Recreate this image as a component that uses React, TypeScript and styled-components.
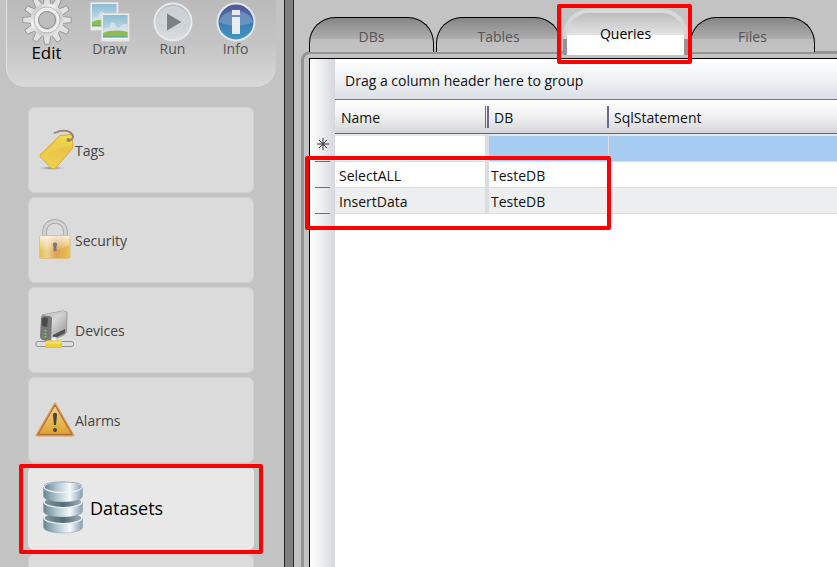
import React, { useState } from "react";
import styled, { createGlobalStyle, css } from "styled-components";

const GlobalStyle = createGlobalStyle`
  *, *::before, *::after { box-sizing: border-box; }
  html, body, #root { height: 100%; }
  body {
    margin: 0;
    overflow: hidden;
    background: #c3c3c3;
    font-family: "Open Sans", "Noto Sans", sans-serif;
    font-size: 14px;
    color: #111;
  }
  button { font: inherit; border: 0; margin: 0; padding: 0; cursor: pointer; }
`;

const Shell = styled.div`
  display: grid;
  grid-template-columns: 284px 10px minmax(0, 1fr);
  height: 100%;
  overflow: hidden;
`;

const Sidebar = styled.aside`
  display: flex;
  flex-direction: column;
  gap: 20px;
  min-height: 0;
  padding: 0 8px 0 6px;
`;

const Splitter = styled.div`
  background: #808080;
  border: solid #262626;
  border-width: 0 1px;
`;

const Toolbar = styled.nav`
  display: flex;
  flex: none;
  height: 87px;
  padding-left: 8px;
  border-left: 1px solid #e2e2e2;
  border-radius: 0 0 20px 20px;
  background: linear-gradient(#bababa, #c4c4c4 50%, #d8d8d8);
`;

const Mode = styled.button<{ $active?: boolean }>`
  display: flex;
  flex-direction: column;
  align-items: center;
  justify-content: flex-start;
  width: 63px;
  height: 66px;
  background: none;
  color: ${(p) => (p.$active ? "#000" : "#555")};
  font-size: ${(p) => (p.$active ? "17px" : "14px")};
  line-height: ${(p) => (p.$active ? "16px" : "14px")};
  white-space: nowrap;
  svg { display: block; flex: none; }
`;

const ModeIcon = styled.span<{ $active?: boolean }>`
  display: flex;
  align-items: flex-end;
  height: ${(p) => (p.$active ? "45px" : "42px")};
`;

const Modules = styled.nav`
  display: flex;
  flex-direction: column;
  gap: 4px;
  padding: 0 22px;
`;

const calloutFrame = css`
  content: "";
  position: absolute;
  z-index: 2;
  border: 4px solid #fe0000;
  border-radius: 2px;
  pointer-events: none;
`;

const ModuleButton = styled.button<{ $active?: boolean }>`
  position: relative;
  display: flex;
  flex: none;
  align-items: center;
  gap: ${(p) => (p.$active ? "7px" : "0")};
  height: ${(p) => (p.$active ? "84px" : "86px")};
  padding-left: ${(p) => (p.$active ? "15px" : "7px")};
  border-radius: 7px;
  background: ${(p) => (p.$active ? "#e8e8e8" : "#dbdbdb")};
  box-shadow: inset 0 0 0 1px ${(p) => (p.$active ? "#ececec" : "#d1d1d1")};
  color: ${(p) => (p.$active ? "#000" : "#444")};
  font-size: ${(p) => (p.$active ? "18px" : "14px")};
  svg { display: block; flex: none; }
  ${(p) =>
    p.$active &&
    css`
      margin-top: -1px;
      &::after { ${calloutFrame} inset: -2px -9px -4px; }
    `}
`;

const Workspace = styled.main`
  display: flex;
  flex-direction: column;
  min-width: 0;
  min-height: 0;
  padding: 9px 0 0 7px;
`;

const TabStrip = styled.div`
  position: relative;
  z-index: 1;
  display: flex;
  align-items: flex-end;
  gap: 2px;
  height: 43px;
  padding-left: 8px;
`;

const Tab = styled.button<{ $active?: boolean }>`
  position: relative;
  flex: none;
  width: 125px;
  height: 35px;
  border: 1px solid #000;
  border-bottom: 0;
  border-radius: 26px 26px 0 0;
  background: linear-gradient(#868686, #afafaf 63%, #bfbfbf 63%, #c3c3c3);
  color: #555;
  padding-top: 3px;
  ${(p) =>
    p.$active &&
    css`
      align-self: flex-start;
      height: 46px;
      padding: 0 0 2px;
      border: 4px solid transparent;
      border-bottom: 0;
      background:
        linear-gradient(#bcbcbc, #e4e4e4 52%, #fff 52%) padding-box,
        linear-gradient(#dadada, #d2d2d2 66%, #949494 66%) border-box;
      color: #000;
      &::after { ${calloutFrame} inset: -9px -8px -9px -10px; }
    `}
`;

const Frame = styled.div`
  display: flex;
  flex: 1;
  min-height: 0;
  margin-top: -1px;
  padding: 4px 0 0 5px;
  border: solid #949494;
  border-width: 3px 0 0 3px;
  border-radius: 9px 0 0 0;
`;

const DataGrid = styled.section`
  position: relative;
  flex: 1;
  min-width: 0;
  border: solid #000;
  border-width: 1px 0 0 1px;
  background:
    linear-gradient(90deg, #fff, #f3f5f6 30%, #d5d7dd) 0 0 / 25px 100% no-repeat,
    #fff;
`;

const GroupPanel = styled.div`
  display: flex;
  align-items: center;
  height: 41px;
  margin-left: 25px;
  padding: 2px 10px 0;
  border-bottom: 1px solid #777;
  background: linear-gradient(#fff, #f0f2f4 50%, #dbe0e7);
`;

const Table = styled.table`
  width: 100%;
  table-layout: fixed;
  border-collapse: separate;
  border-spacing: 0;
  text-align: left;
  th, td { padding: 0; font-weight: 400; white-space: nowrap; }
`;

const HeadCell = styled.th`
  height: 34px;
  background: linear-gradient(#fff, #f2f2f3 45%, #d5d6da);
  border-bottom: 1px solid #666;
`;

const HeadLabel = styled.span<{ $rule?: "double" | "single" }>`
  display: flex;
  align-items: center;
  height: 22px;
  padding-top: 1px;
  padding-left: ${(p) => (p.$rule === "double" ? "6px" : "5px")};
  border-right: ${(p) => (p.$rule ? "2px solid #6c6a90" : "0")};
  ${(p) =>
    p.$rule === "double" &&
    css`
      background: linear-gradient(#6c6a90, #6c6a90) right 1px top 0 / 1px 100% no-repeat;
    `}
`;

const Row = styled.tr<{ $tone: "new" | "plain" | "shade" }>`
  td {
    height: ${(p) => (p.$tone === "new" ? "28px" : "26px")};
    padding: 2px 0 0 4px;
    border-bottom: 1px solid #dcdde2;
    background: ${(p) => ({ new: "#a6ccf1", plain: "#fff", shade: "#eceef0" })[p.$tone]};
    ${(p) => p.$tone === "new" && "border-top: 2px solid #e1e6ed;"}
  }
  td:nth-child(2) {
    border-right: 4px solid #dcdde0;
    ${(p) => p.$tone === "new" && "background: #fff;"}
  }
  td:nth-child(3) {
    padding-left: 2px;
    border-right: 1px solid #dcdde0;
  }
`;

const RowHead = styled.th`
  vertical-align: bottom;
`;

const RowMark = styled.span`
  display: flex;
  align-items: flex-start;
  justify-content: center;
  width: 15px;
  height: 24px;
  margin-left: 5px;
  border-bottom: 1px solid #6c6a90;
`;

const Callout = styled.span`
  &::after {
    ${calloutFrame}
    left: -5px;
    top: 97px;
    width: 306px;
    height: 74px;
  }
`;

const Gear = () => {
  const teeth = Array.from({ length: 12 }, (_, i) => i * 30);
  return (
    <svg width="50" height="50" viewBox="0 0 50 50" aria-hidden="true">
      <defs>
        <linearGradient id="gear" x1="0" y1="0" x2="1" y2="1">
          <stop offset="0" stopColor="#aaa" />
          <stop offset=".35" stopColor="#f5f5f5" />
          <stop offset=".6" stopColor="#cacaca" />
          <stop offset="1" stopColor="#f4f4f4" />
        </linearGradient>
      </defs>
      <g fill="#e2e2e2" stroke="#858585" strokeWidth=".7">
        {teeth.map((a) => (
          <path key={a} d="M21.4 10 22.5.8h5L28.600 10z" transform={`rotate(${a} 25 25)`} />
        ))}
      </g>
      <circle cx="25" cy="25" r="16.500" fill="url(#gear)" />
      <circle cx="25" cy="25" r="11.500" fill="none" stroke="#efefef" strokeWidth="3" />
      <circle cx="25" cy="25" r="13" fill="none" stroke="#aaa" strokeWidth=".8" />
      <circle cx="25" cy="25" r="8.500" fill="#bdbdbd" stroke="#8b8b8b" />
    </svg>
  );
};

const Photos = () => (
  <svg width="40" height="40" viewBox="0 0 40 40" aria-hidden="true">
    <defs>
      <linearGradient id="sky" x1="0" y1="0" x2="0" y2="1">
        <stop offset="0" stopColor="#8dbdd5" />
        <stop offset="1" stopColor="#d3e2e9" />
      </linearGradient>
      <g id="photo">
        <path fill="#ececec" stroke="#d5d5d5" strokeWidth=".5" d="M.3.300h28v28h-28z" />
        <path fill="url(#sky)" d="M2 2h24.600v22.500H2z" />
        <path fill="#d7e0e9" d="M2 19c1-3 3-5 6-4 1-5 4-7 6-4 1 3 2 4 4 4 3-4 6-5 8.600-3v9H2z" />
        <path fill="#8cbd55" d="M2 20c7-3 15-3 24.600-1v5H2z" />
        <path fill="#63ad8c" d="M2 23h24.600v1.500H2z" />
      </g>
    </defs>
    <use href="#photo" />
    <use href="#photo" x="11" y="11" />
  </svg>
);

const Play = () => (
  <svg width="40" height="40" viewBox="0 0 40 40" aria-hidden="true">
    <defs>
      <linearGradient id="silver" x1="0" y1="0" x2="0" y2="1">
        <stop offset="0" stopColor="#b3babf" />
        <stop offset="1" stopColor="#dce1e3" />
      </linearGradient>
    </defs>
    <circle cx="20" cy="20" r="18.500" fill="url(#silver)" stroke="#e9e9e9" strokeWidth="2" />
    <path fill="#d3d9dc" opacity=".7" d="M3 20C5 10 11 4 20 4s15 6 17 16c-9 5-25 5-34 0z" />
    <path fill="#7b8085" d="M14 11.500 28.500 20 14 28.500z" />
  </svg>
);

const Info = () => (
  <svg width="40" height="40" viewBox="0 0 40 40" aria-hidden="true">
    <defs>
      <linearGradient id="blue" x1="0" y1="0" x2="0" y2="1">
        <stop offset="0" stopColor="#56559a" />
        <stop offset=".5" stopColor="#3c78ae" />
        <stop offset="1" stopColor="#429bc8" />
      </linearGradient>
    </defs>
    <circle cx="20" cy="20" r="18.500" fill="url(#blue)" stroke="#e5e7ea" strokeWidth="2" />
    <path fill="#a5c0da" opacity=".4" d="M3 20C5 13 11 9 20 9s15 4 17 11c-9 5-25 5-34 0z" />
    <path fill="#ececf0" d="M16 8h8v5h-8zM16 15h8v17h-8z" />
  </svg>
);

const TagIcon = () => (
  <svg width="40" height="44" viewBox="0 0 40 44" aria-hidden="true">
    <defs>
      <linearGradient id="tag" x1=".7" y1="0" x2=".3" y2="1">
        <stop offset="0" stopColor="#f1dc3c" />
        <stop offset=".3" stopColor="#ebc146" />
        <stop offset="1" stopColor="#ecd34c" />
      </linearGradient>
      <radialGradient id="tagShade">
        <stop offset="0" stopColor="#666" />
        <stop offset="1" stopColor="#bbb" stopOpacity="0" />
      </radialGradient>
    </defs>
    <ellipse cx="17" cy="40" rx="14" ry="2" fill="url(#tagShade)" />
    <path fill="url(#tag)" stroke="#dfa640" d="M25 7.500 37 6.500 38 20 20 40.500 17 41 5.500 29 5 27z" strokeLinejoin="round" />
    <path fill="#f2e36b" opacity=".35" d="M25 8.500 36.500 7.500 37.500 17 15 23 9 27z" />
    <circle cx="33.500" cy="12" r="2" fill="#9d8060" />
    <path fill="none" stroke="#9a8171" strokeWidth="1.800" strokeLinecap="round" d="M33.500 12.500c4 0 6-4 3-7-4-4-11-3-17-.500" />
  </svg>
);

const LockIcon = () => (
  <svg width="40" height="42" viewBox="0 0 40 42" aria-hidden="true">
    <defs>
      <linearGradient id="brass">
        <stop offset="0" stopColor="#e5bd55" />
        <stop offset=".25" stopColor="#edd391" />
        <stop offset=".55" stopColor="#dfa055" />
        <stop offset="1" stopColor="#e9c251" />
      </linearGradient>
      <linearGradient id="brassTop" x1="0" y1="0" x2="0" y2="1">
        <stop offset="0" stopColor="#fff" stopOpacity=".75" />
        <stop offset="1" stopColor="#fff" stopOpacity=".05" />
      </linearGradient>
    </defs>
    <path fill="none" stroke="#a0a0a0" strokeWidth="4.500" d="M9.500 17v-4c0-14 21-14 21 0v4" />
    <path fill="none" stroke="#d3d3d3" strokeWidth="2.800" d="M9.500 17v-4c0-14 21-14 21 0v4" />
    <rect x="4.500" y="16.500" width="30.500" height="23" rx="2" fill="url(#brass)" stroke="#e0c27c" />
    <path fill="url(#brassTop)" d="M5 17h29.500v9c-6 4-16 6-29.500 5z" />
    <path fill="#777" d="M20 23.500a2 2 0 0 0-1.500 3.500V32h3v-5A2 2 0 0 0 20 23.500z" />
  </svg>
);

const DeviceIcon = () => (
  <svg width="40" height="40" viewBox="0 0 40 40" aria-hidden="true">
    <defs>
      <linearGradient id="metal" x1="0" y1="0" x2="1" y2="1">
        <stop offset="0" stopColor="#999" />
        <stop offset=".4" stopColor="#d8d8d8" />
        <stop offset="1" stopColor="#8a8a8a" />
      </linearGradient>
    </defs>
    <path fill="url(#metal)" stroke="#8c8c8c" strokeWidth=".8" d="M7 5 28 1l4 1-.500 20L29 25l-12 5-7-1z" />
    <path fill="#c9c9c9" d="m8 5 20-4 3 1-13 4z" />
    <path fill="#777" d="M6 8c0-3 10-3 11 0l-1 22-5 1c-4-1-6-2-6-5z" />
    <path fill="#4a4a4a" d="M7 9c0-2 6-2 6 0l-1 8-5-1z" />
    <path fill="#505050" d="m18 25 12-6v4l-12 6z" />
    <path stroke="#60d956" strokeWidth="2" strokeDasharray="1.500 1.500" d="M10.500 20v8" />
    <rect x="16" y="27" width="6" height="6" rx="2" fill="#eee" stroke="#aaa" strokeWidth=".6" />
    <rect x=".700" y="31.500" width="38" height="5" rx="2.500" fill="#ddd" stroke="#909090" />
    <path fill="#ecd333" stroke="#e6bf38" d="M11 31h15.500v6.500H11z" />
    <path fill="#f3e36b" d="M11 31.500h15.500v2H11z" />
  </svg>
);

const AlarmIcon = () => (
  <svg width="40" height="36" viewBox="0 0 40 36" aria-hidden="true">
    <defs>
      <linearGradient id="amber" x1="0" y1="0" x2="0" y2="1">
        <stop offset="0" stopColor="#efd28b" />
        <stop offset="1" stopColor="#e0a32c" />
      </linearGradient>
    </defs>
    <path fill="#dda24e" stroke="#dda24e" strokeWidth="2" strokeLinejoin="round" d="M20 1.500 38.500 33.500h-37z" />
    <path fill="url(#amber)" stroke="#b56d48" strokeWidth="1.300" strokeLinejoin="round" d="M20 3 37 32.500H3z" />
    <path fill="#444" d="M18 13c0-3 4-3 4 0l-1 10h-2z" />
    <circle cx="20" cy="28" r="2" fill="#444" />
  </svg>
);

const DatabaseIcon = () => (
  <svg width="40" height="54" viewBox="0 0 40 54" aria-hidden="true">
    <defs>
      <linearGradient id="steel">
        <stop offset="0" stopColor="#678594" />
        <stop offset=".35" stopColor="#b4c7d2" />
        <stop offset=".68" stopColor="#f6f9fb" />
        <stop offset="1" stopColor="#849eb0" />
      </linearGradient>
      <linearGradient id="shadow">
        <stop offset="0" stopColor="#8498a1" />
        <stop offset=".5" stopColor="#536a74" />
        <stop offset="1" stopColor="#a0b2bb" />
      </linearGradient>
    </defs>
    {[32, 16, 1].map((y) => (
      <g key={y} transform={`translate(0 ${y})`}>
        <path fill="url(#steel)" stroke="#7791a0" strokeWidth=".4" d="M.5 5v9c0 8 39 8 39 0V5z" />
        <ellipse cx="20" cy="5" rx="19" ry="5.500" fill={y === 1 ? "url(#steel)" : "url(#shadow)"} stroke="#f0f4f6" strokeWidth="1.200" />
      </g>
    ))}
    <path fill="none" stroke="#6e8795" strokeWidth=".7" d="M1 5C2-.500 38-.500 39 5" />
  </svg>
);

const NewRowStar = () => (
  <svg width="12" height="12" viewBox="0 0 12 12" aria-label="New row">
    <path stroke="#333" strokeWidth="1" d="M6 0v12M0 6h12M2 2l8 8M10 2l-8 8" />
  </svg>
);

const modes = [
  { name: "Edit", icon: <Gear /> },
  { name: "Draw", icon: <Photos /> },
  { name: "Run", icon: <Play /> },
  { name: "Info", icon: <Info /> },
];

const modules = [
  { name: "Tags", icon: <TagIcon /> },
  { name: "Security", icon: <LockIcon /> },
  { name: "Devices", icon: <DeviceIcon /> },
  { name: "Alarms", icon: <AlarmIcon /> },
  { name: "Datasets", icon: <DatabaseIcon /> },
];

const queries = [
  { name: "SelectALL", db: "TesteDB", sql: "" },
  { name: "InsertData", db: "TesteDB", sql: "" },
];

export default function App() {
  const [tab, setTab] = useState("Queries");
  return (
    <>
      <GlobalStyle />
      <Shell>
        <Sidebar>
          <Toolbar aria-label="Mode">
            {modes.map((m) => (
              <Mode key={m.name} $active={m.name === "Edit"}>
                <ModeIcon $active={m.name === "Edit"}>{m.icon}</ModeIcon>
                {m.name}
              </Mode>
            ))}
          </Toolbar>
          <Modules aria-label="Modules">
            {modules.map((m) => (
              <ModuleButton key={m.name} $active={m.name === "Datasets"}>
                {m.icon}
                {m.name}
              </ModuleButton>
            ))}
            <ModuleButton aria-label="More" />
          </Modules>
        </Sidebar>
        <Splitter />
        <Workspace>
          <TabStrip role="tablist">
            {["DBs", "Tables", "Queries", "Files"].map((t) => (
              <Tab key={t} role="tab" aria-selected={t === tab} $active={t === tab} onClick={() => setTab(t)}>
                {t}
              </Tab>
            ))}
          </TabStrip>
          <Frame>
            <DataGrid>
              <GroupPanel>Drag a column header here to group</GroupPanel>
              <Table>
                <colgroup>
                  <col width="25" />
                  <col width="154" />
                  <col width="120" />
                  <col />
                </colgroup>
                <thead>
                  <tr>
                    <th aria-label="Row" />
                    <HeadCell><HeadLabel $rule="double">Name</HeadLabel></HeadCell>
                    <HeadCell><HeadLabel $rule="single">DB</HeadLabel></HeadCell>
                    <HeadCell><HeadLabel>SqlStatement</HeadLabel></HeadCell>
                  </tr>
                </thead>
                <tbody>
                  <Row $tone="new">
                    <RowHead><RowMark><NewRowStar /></RowMark></RowHead>
                    <td /><td /><td />
                  </Row>
                  {queries.map((q, i) => (
                    <Row key={q.name} $tone={i % 2 ? "shade" : "plain"}>
                      <RowHead><RowMark /></RowHead>
                      <td>{q.name}</td>
                      <td>{q.db}</td>
                      <td>{q.sql}</td>
                    </Row>
                  ))}
                </tbody>
              </Table>
              <Callout />
            </DataGrid>
          </Frame>
        </Workspace>
      </Shell>
    </>
  );
}
